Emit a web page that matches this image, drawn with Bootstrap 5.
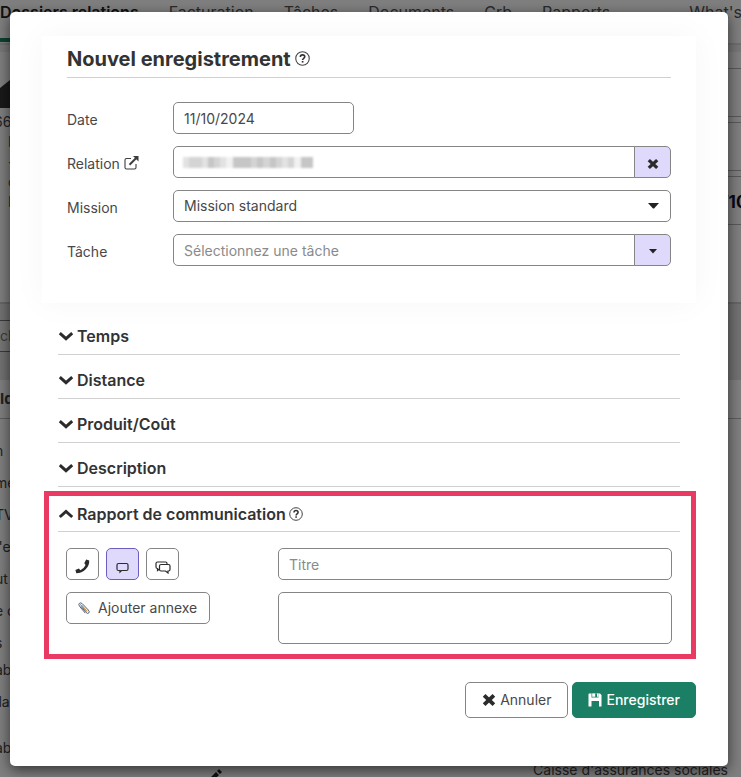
<!DOCTYPE html>
<html lang="fr">
<head>
<meta charset="utf-8">
<meta name="viewport" content="width=device-width, initial-scale=1">
<title>Nouvel enregistrement</title>
<link href="https://cdn.jsdelivr.net/npm/bootstrap@5.3.0/dist/css/bootstrap.min.css" rel="stylesheet">
<style>
body { font-family: Inter, "Liberation Sans", sans-serif; font-size: 14px; line-height: 20px; color: #484848; }
.stage { min-height: 100vh; overflow: hidden; }
.page-back { inset: 0; overflow: hidden; color: #444; background: #fff; }
.veil { inset: 0; background: rgba(0,0,0,.5); }
/* application behind the dialog */
.app-nav { height: 45px; border-bottom: 2px solid #dcdcdc; gap: 30px; white-space: nowrap; font-size: 16px; line-height: 24px; align-items: stretch; }
.app-nav a { color: #555; text-decoration: none; }
.app-nav a.current { font-weight: 600; color: #222; border-bottom: 4px solid #1b8062; margin-bottom: 1px; }
.app-nav a.news { margin-left: 49px; }
.app-strip { height: 7px; background: #eee; }
.app-top { height: 252px; border-bottom: 2px solid #ccc; }
.app-side { width: 60px; line-height: 20px; }
.app-side .roof { display: block; height: 56px; width: 60px; }
.app-side .phone { margin: 4px 0 0 -6px; }
.app-side .contact { padding-left: 8px; color: #8a5020; }
.app-cards { width: 60px; }
.app-cards .slot { height: 49px; border: 1px solid #b5b5b5; border-width: 1px 0; margin-bottom: 5px; }
.app-cards .dated { font-size: 17px; font-weight: 700; padding: 15px 0 0 41px; color: #113; line-height: 20px; }
.app-search { height: 76px; background: #e4e4e4; padding-top: 16px; }
.app-search span { display: block; width: 60px; height: 32px; border: 1px solid #777; border-left: 0; background: #eee; line-height: 30px; color: #777; }
.app-title { height: 39px; font-weight: 700; font-size: 15px; line-height: 38px; border-bottom: 1px solid #bbb; }
.app-list { margin: 16px 0 0 -5px; line-height: 32px; }
.app-list .close-up { margin-top: -5px; }
.app-list .spaced { margin-top: 14px; }
.app-foot { line-height: 20px; font-size: 14px; bottom: -3px; right: 13px; }
.app-pencil { left: 209px; bottom: -5px; }
/* dialog */
.dialog-wrap { padding: 12px 13px 11px 10px; }
.dialog-box { border-radius: 5px; background: #fff; box-shadow: 0 4px 14px rgba(0,0,0,.6); padding: 24px 32px 48px; }
.panel { padding: 10px 25px 37px; box-shadow: 0 0 32px rgba(0,0,0,.04); margin-bottom: 8px; }
.panel h1 { font-size: 20px; line-height: 26px; font-weight: 700; color: #333; margin: 0 0 24px; padding-bottom: 5px; border-bottom: 1px solid #d0d0d0; }
.field-row { display: grid; grid-template-columns: 106px 1fr; margin-bottom: 12px; }
.field-row:last-child { margin-bottom: 0; }
.field-row > label { padding-top: 8px; }
.form-control, .form-select { font-size: 14px; line-height: 20px; height: 32px; padding: 5px 10px; border-color: #858585; border-radius: 5px; color: #484848; }
.form-control::placeholder { color: #8a8a8a; }
.form-select { background-image: none; padding-right: 30px; }
.select-arrow { right: 12px; top: 13px; pointer-events: none; }
.date-field { width: 181px; }
.side-btn { background: #dfd9fb; border: 1px solid #858585; width: 37px; padding: 0; border-radius: 5px; line-height: 1; }
.side-btn:hover { background: #d2c9f9; border-color: #858585; }
.masked { display: flex; left: 11px; top: 11px; height: 11px; width: 130px; filter: blur(1px); z-index: 6; pointer-events: none; }
.masked i { flex: 1; background: #c6c6c6; }
.fold { margin: 0 16px; height: 44px; border-bottom: 1px solid #d0d0d0; padding-bottom: 8px; display: flex; align-items: flex-end; }
.fold-btn { border: 0; background: none; padding: 0; font-size: 16px; line-height: 20px; font-weight: 600; color: #333; display: flex; align-items: center; gap: 3px; }
.focus-frame { border: 5px solid #e83a63; margin: 4px 0 23px 2px; padding: 0 11px 10px 9px; }
.focus-frame .fold { margin: 0; height: 36px; align-items: center; padding: 0; gap: 3px; }
.report { display: grid; grid-template-columns: 212px 1fr; padding: 16px 8px 0; row-gap: 12px; }
.modes { display: flex; gap: 7px; }
.line-btn { border: 1px solid #858585; border-radius: 5px; background: #fff; color: #484848; font-size: 14px; line-height: 20px; height: 32px; padding: 5px 12px 5px 11px; }
.square { width: 33px; padding: 5px 0 0; line-height: 1; }
.square.chosen, .square.chosen:hover { background: #dfd9fb; border-color: #6f5cc0; }
.report textarea.form-control { height: 52px; resize: none; }
.big-btn { height: 36px; font-size: 14px; line-height: 20px; border-radius: 5px; padding: 7px 16px; display: inline-flex; align-items: center; gap: 4px; }
.save-btn, .save-btn:hover { background: #1b7f66; border-color: #1b7f66; color: #fff; font-weight: 500; padding: 7px 15px; }
svg { vertical-align: middle; flex: none; }
</style>
<script src="https://cdn.jsdelivr.net/npm/bootstrap@5.3.0/dist/js/bootstrap.bundle.min.js"></script>
</head>
<body>
<svg width="0" height="0" class="position-absolute" aria-hidden="true">
  <symbol id="help" viewBox="0 0 14 14"><circle cx="7" cy="7" r="6.3" fill="none" stroke="#444" stroke-width="1"/><path d="M5 5.5C5 4.2 5.9 3.6 7 3.6s2.1.7 2.1 1.8C9.100 6.800 7.100 6.800 7.100 8.400" fill="none" stroke="#333" stroke-width="1.500"/><rect x="6.300" y="9.300" width="1.600" height="1.500" fill="#333"/></symbol>
  <symbol id="down" viewBox="0 0 16 12"><path d="M1.800 3.200L8 8.700l6.200-5.500" fill="none" stroke="#2b2b2b" stroke-width="3"/></symbol>
  <symbol id="cross" viewBox="0 0 12 12"><path d="M1.800 2.100l8.400 7.800M10.200 2.100L1.800 9.900" fill="none" stroke="#2b2b2b" stroke-width="3.300"/></symbol>
</svg>
<div class="stage position-relative">
  <div class="page-back position-absolute" aria-hidden="true">
    <nav class="app-nav d-flex">
      <a href="#" class="current">Dossiers relations</a><a href="#">Facturation</a><a href="#">Tâches</a><a href="#">Documents</a><a href="#">Crb</a><a href="#">Rapports</a><a href="#" class="news">What's</a>
    </nav>
    <div class="app-strip"></div>
    <div class="app-top d-flex justify-content-between">
      <div class="app-side">
        <svg class="roof" viewBox="0 0 60 56"><path d="M0 36L10 28 30 12V56H0z" fill="#333"/></svg>
        <div class="phone">66</div>
        <div class="contact"><div>N</div><div>-</div><div>c</div><div>M</div></div>
      </div>
      <div class="app-cards pt-3"><div class="slot"></div><div class="slot"></div><div class="slot dated">/10</div></div>
    </div>
    <div class="app-search"><span>ch</span></div>
    <div class="app-title">Id</div>
    <ul class="app-list list-unstyled">
      <li>n</li><li>me</li><li>TV</li><li>l'e</li><li>ut</li><li>e c</li><li>s</li><li class="close-up">ab</li><li>lla</li><li class="spaced">ab</li>
    </ul>
    <div class="app-foot position-absolute">Caisse d'assurances sociales</div>
    <svg class="app-pencil position-absolute" width="13" height="13" viewBox="0 0 13 13"><path d="M0 13l1-4 6-6 3 3-6 6zM8 2l2-2 3 3-2 2z" fill="#222"/></svg>
  </div>
  <div class="veil position-absolute"></div>

  <div class="dialog-wrap position-relative">
    <form class="dialog-box" role="dialog" aria-labelledby="dlg-title">
      <section class="panel">
        <h1 id="dlg-title">Nouvel enregistrement <svg width="15" height="15" class="mb-1"><use href="#help"/></svg></h1>
        <div class="field-row">
          <label for="date">Date</label>
          <input id="date" class="form-control date-field" type="text" value="11/10/2024">
        </div>
        <div class="field-row">
          <label for="relation">Relation <svg class="mb-1" width="15" height="14" viewBox="0 0 15 14"><path d="M7 2.500H2.500Q1 2.500 1 4v7.500Q1 13 2.500 13h8Q12 13 12 11.500V8" fill="none" stroke="#3d3d3d" stroke-width="1.100"/><path d="M5.500 8.700L12 2.200" stroke="#3d3d3d" stroke-width="2"/><path d="M9 0h5.500v5.500z" fill="#3d3d3d"/></svg></label>
          <div class="input-group position-relative">
            <input id="relation" class="form-control" type="text">
            <span class="masked position-absolute" aria-hidden="true"><i class="opacity-50"></i><i class="opacity-75"></i><i class="opacity-75"></i><i class="opacity-50"></i><i></i><i class="opacity-75"></i><i class="opacity-50"></i><i class="opacity-25"></i><i></i><i></i><i></i><i class="opacity-75"></i><i></i><i class="opacity-75"></i><i></i><i class="opacity-75"></i><i class="opacity-50"></i><i class="opacity-75"></i><i class="opacity-25"></i><i></i><i></i></span>
            <button type="button" class="btn side-btn" aria-label="Effacer"><svg width="12" height="12"><use href="#cross"/></svg></button>
          </div>
        </div>
        <div class="field-row">
          <label for="mission">Mission</label>
          <div class="position-relative">
            <select id="mission" class="form-select"><option>Mission standard</option></select>
            <svg class="select-arrow position-absolute" width="11" height="6" viewBox="0 0 11 6"><path d="M0 0h11L6.500 5q-1 1-2 0z" fill="#222"/></svg>
          </div>
        </div>
        <div class="field-row">
          <label for="tache">Tâche</label>
          <div class="input-group">
            <input id="tache" class="form-control" type="text" placeholder="Sélectionnez une tâche">
            <button type="button" class="btn side-btn" aria-label="Ouvrir la liste"><svg width="8" height="5" viewBox="0 0 8 5"><path d="M0 0h8L4 4.500z" fill="#222"/></svg></button>
          </div>
        </div>
      </section>

      <div class="fold"><button type="button" class="fold-btn"><svg width="16" height="12"><use href="#down"/></svg>Temps</button></div>
      <div class="fold"><button type="button" class="fold-btn"><svg width="16" height="12"><use href="#down"/></svg>Distance</button></div>
      <div class="fold"><button type="button" class="fold-btn"><svg width="16" height="12"><use href="#down"/></svg>Produit/Coût</button></div>
      <div class="fold"><button type="button" class="fold-btn"><svg width="16" height="12"><use href="#down"/></svg>Description</button></div>

      <section class="focus-frame">
        <div class="fold">
          <button type="button" class="fold-btn"><svg width="16" height="12" viewBox="0 0 16 12"><path d="M1.800 9L8 3.500 14.200 9" fill="none" stroke="#2b2b2b" stroke-width="3"/></svg>Rapport de communication</button>
          <svg width="14" height="14"><use href="#help"/></svg>
        </div>
        <div class="report">
          <div class="modes">
            <button type="button" class="btn line-btn square" aria-label="Téléphone"><svg width="15" height="15" viewBox="0 0 15 15"><path d="M11.200.500l3 .9q.3 5-3.500 8.900T1.300 14.200L.4 11.100l3.500-1.500 1.500 1.600q3.400-1.500 5.200-5.300L9.300 4.200z" fill="#2b2b2b"/></svg></button>
            <button type="button" class="btn line-btn square chosen" aria-label="Message"><svg width="13" height="12" viewBox="0 0 13 12"><path d="M2.500 1.500h8Q12 1.500 12 3v4Q12 8.500 10.500 8.500H5.500L4 10V8.500H2.500Q1 8.500 1 7V3Q1 1.500 2.500 1.500z" fill="none" stroke="#2b2b2b" stroke-width="1.200"/></svg></button>
            <button type="button" class="btn line-btn square" aria-label="Discussion"><svg width="16" height="13" viewBox="0 0 16 13"><path d="M12 3.200V2.500Q12 1 10.500 1h-8Q1 1 1 2.500v3.500Q1 7.500 2.500 7.500V9.500L4.500 8" fill="none" stroke="#2b2b2b" stroke-width="1.200"/><path d="M6 3.500h7.500Q15 3.500 15 5v3.500Q15 10 13.500 10H13v2L10.500 10H6Q4.500 10 4.500 8.500V5Q4.500 3.500 6 3.500z" fill="#fff" stroke="#2b2b2b" stroke-width="1.200"/></svg></button>
          </div>
          <input class="form-control" type="text" placeholder="Titre" aria-label="Titre">
          <div><button type="button" class="btn line-btn d-inline-flex align-items-center gap-2"><svg width="12" height="13" viewBox="0 0 12 13"><g fill="none" stroke-linecap="round"><path d="M3 4.500L7.800 10.200q1.900 2 3 .8t-.5-3L4.300 1.700Q2.500.2 1.300 1.400T1.700 4.500L7 10.800" stroke="#5a6470" stroke-width="1"/><path d="M3.800 3.500l5.200 5.600" stroke="#e09a4a" stroke-width="1.300"/><path d="M2.400 2.500l5.200 6.600" stroke="#4d98dc" stroke-width="1"/></g></svg>Ajouter annexe</button></div>
          <textarea class="form-control" aria-label="Rapport"></textarea>
        </div>
      </section>

      <div class="d-flex justify-content-end gap-1">
        <button type="button" class="btn line-btn big-btn"><svg width="14" height="14"><use href="#cross"/></svg>Annuler</button>
        <button type="submit" class="btn save-btn big-btn"><svg width="14" height="14" viewBox="0 0 14 14"><path d="M1 .5h11l1.500 1.500v11.500H11V8H3.500v5.500H.500V1z" fill="#fff"/><path d="M3.500.5h7v4h-7z" fill="#1b7f66"/><path d="M4.200.5h3v3.300h-3zM9 .5h1.500v3.300H9z" fill="#fff"/></svg>Enregistrer</button>
      </div>
    </form>
  </div>
</div>
</body>
</html>
